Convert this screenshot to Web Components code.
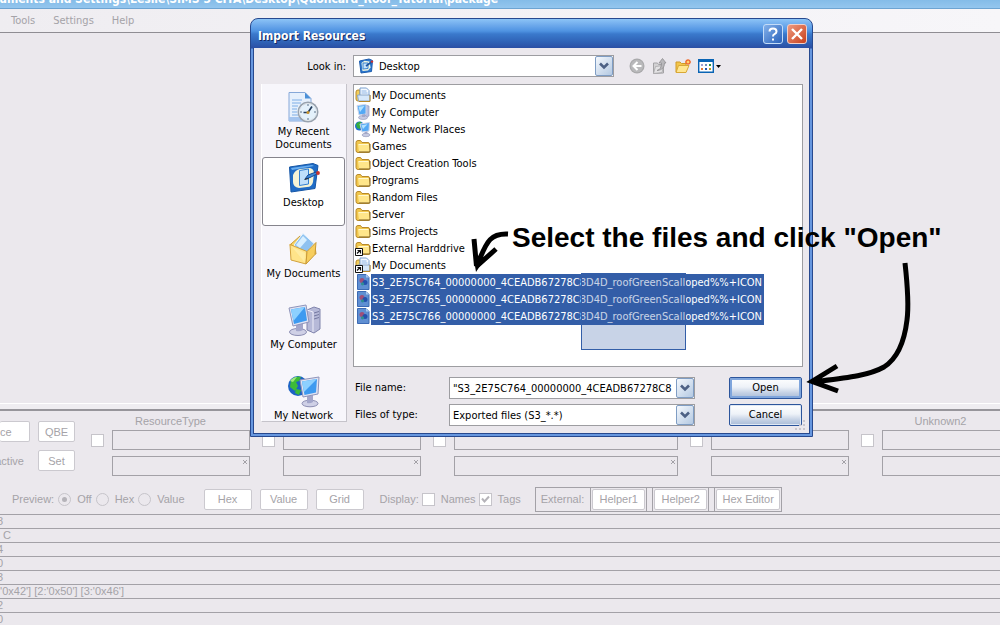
<!DOCTYPE html>
<html lang="en">
<head>
<meta charset="utf-8">
<title>Import Resources</title>
<style>
html, body { margin: 0; height: 100%; }
body {
  overflow: hidden;
  background: #ebe8ed;
  font: 11px/14px "Liberation Sans", Arial, sans-serif;
  color: #a5a3a8;
  --ui: "DejaVu Sans Condensed", "DejaVu Sans", Tahoma, sans-serif;
}
</style>
</head>
<body>
<package-editor>
  <import-dialog></import-dialog>
  <tutorial-note></tutorial-note>
</package-editor>

<script>
const define = (name, html, extra) => customElements.define(name, class extends HTMLElement {
  constructor() {
    super();
    const t = document.createElement('template');
    t.innerHTML = typeof html === 'function' ? html(this) : html;
    this.attachShadow({ mode: 'open' }).append(t.content.cloneNode(true));
    if (extra) extra(this, this.shadowRoot);
  }
});

/* ---------- icon drawings ---------- */
const folder = `<path d="M1 4.500q0-2 2-2h2.500l1.500 2h6q1.500 0 1.500 1.500v7q0 1.500-1.500 1.500H3q-2 0-2-2z" fill="#f0c64c" stroke="#b8892a"/><path d="M3 6.500h11l1 6.500q0 1.200-1.200 1.200H4z" fill="#ffe68a"/><path d="M3.500 6.500h10" stroke="#fff8cf"/><path d="M15 6v8H4" fill="none" stroke="#7a5c1c"/>`;
const docs = `<path d="M1 5q0-2 2-2h2v11H3q-2 0-2-2z" fill="#f3cf5c" stroke="#b8892a"/><path d="M5 1h6.500L14 3.500V11H5z" fill="#f4f9ff" stroke="#7b9fce"/><path d="M6.500 4h5M6.500 6h6" stroke="#8db4e4"/><path d="M2.500 8h12.500v6H3.500z" fill="#d7e8fa" stroke="#8aa6c8"/><path d="M4 14.500h11V8" fill="none" stroke="#b8892a"/>`;
const link = `<path d="M.5 8.500h7v7h-7z" fill="#fff" stroke="#111"/><path d="M2 13.500l3-3M2.500 10.500H5.500V13.500" fill="none" stroke="#111" stroke-width="1.200"/>`;
const desk16 = `<path d="M1.500 3L11 1l3.500 1.500-1 11L3 15z" fill="#2c78cf" stroke="#1c5cae"/><path d="M3.500 5l3-2.200 5 .7 1 6-2.500 3-5.500.5z" fill="#f3f7df"/><path d="M5 5h5v5.500l-5 .5z" fill="#c4e2fb" stroke="#3b83d0"/><path d="M8 8l5.500-4" stroke="#1d559f" stroke-width="1.600"/><circle cx="14" cy="3.600" r="1.200" fill="#c33"/>`;
const pc16 = `<path d="M10 1l4 1v10l-4 2z" fill="#b9bfdf" stroke="#8a90b8" stroke-width=".6"/><path d="M2 1.500l9-1v9.500L4 11z" fill="#54a9f5" stroke="#cfd6ea"/><path d="M3.500 2.700L9.500 2 5 8z" fill="#b3e2ff"/><ellipse cx="8" cy="13.500" rx="4.500" ry="2" fill="#c6cae2" stroke="#8e93b5" stroke-width=".6"/><path d="M7 10.500l3-.5v3H7z" fill="#a3a9ca"/>`;
const net16 = `<circle cx="4.500" cy="5" r="4.500" fill="#1f6fcf"/><path d="M1 3q3-3 5-2l1 3-2 4-3-1z" fill="#35ad3f"/><path d="M5 3l9.500-1.500-.5 8.500-7 1z" fill="#54a9f5" stroke="#cfd6ea"/><path d="M6.500 4.200l6-1L8 8z" fill="#b3e2ff"/><path d="M9.500 11l3-.5v3h-3z" fill="#a3a9ca"/><ellipse cx="11" cy="14" rx="4" ry="1.700" fill="#c6cae2" stroke="#8e93b5" stroke-width=".6"/>`;
const ICONS = {
  folder: [16, folder],
  'folder-link': [16, folder + link],
  docs: [16, docs],
  'docs-link': [16, docs + link],
  desktop: [16, desk16],
  computer: [16, pc16],
  network: [16, net16],
  package: [16, `<path d="M2.500 .5h8.500l3 3v12H2.500z" fill="#5f8fd2" stroke="#3c6ab4"/><path d="M11 .5v3h3z" fill="#a8c8f0"/><circle cx="7" cy="6.500" r="2.500" fill="#a04f78"/><circle cx="10" cy="8.500" r="2.500" fill="#2451ad"/><circle cx="7.500" cy="9.800" r="1.600" fill="#2f8f92"/>`],
  back: [16, `<circle cx="8" cy="8" r="7.500" fill="#a9a9ab"/><circle cx="8" cy="8" r="6.300" fill="#b9b9bb"/><path d="M8.500 4L4.500 8l4 4M5 8h7.500" fill="none" stroke="#fff" stroke-width="2"/>`],
  up: [16, `<path d="M1.500 5h4l1 1.500h5V15l-10 .5z" fill="#d3d2d4" stroke="#a3a2a5"/><path d="M3.500 8.500l8-1-1.500 7-8.500 1z" fill="#e3e2e4" stroke="#a9a8ab" stroke-width=".8"/><path d="M5 12.500q4.500-1 4.500-7.500H7L10.500.5 14 5h-1.500q0 7-7.500 7.500z" fill="#b9b8bb" stroke="#8f8e91" stroke-width=".8"/>`],
  create: [16, `<path d="M1 4h4l1.500 1.500H11V14H1z" fill="#f3c54a" stroke="#d09b28"/><path d="M3.500 7.500H14L11 14.500H1z" fill="#ffe690" stroke="#d9a836"/><path d="M13 1v6M10 4h6M10.900 1.900l4.200 4.200M15.100 1.900l-4.200 4.200" stroke="#f0682a" stroke-width="1.300"/><circle cx="13" cy="4" r="1.300" fill="#ffd36b"/>`],
  views: [16, `<path d="M.7 1.700h14.600v12.600H.7z" fill="#fff" stroke="#0a64b4" stroke-width="1.400"/><path d="M0 1h16v3H0z" fill="#0a64b4"/><path d="M3 6h2v2H3z" fill="#a4a0d0"/><path d="M7 6h2v2H7z" fill="#6f8fbd"/><path d="M11 6h2v2h-2z" fill="#2c9240"/><path d="M3 10h2v2H3z" fill="#e07838"/><path d="M7 10h2v2H7z" fill="#2356b0"/><path d="M11 10h2v2h-2z" fill="#c29a20"/>`],
  'recent-32': [32, `<path d="M1 1.500h16l6 6V30H1z" fill="#e6f0fc" stroke="#86a8d8"/><path d="M17 1.500v6h6z" fill="#4a90d8"/><path d="M4 9h10M4 12h9M4 15h6M4 18h5M4 21h5M4 24h6" stroke="#7faee6"/><path d="M1 26h18v4H1z" fill="#a4c4ee"/><circle cx="20" cy="21" r="10.500" fill="#98a2ae"/><circle cx="20" cy="21" r="8.600" fill="#e4f1fb" stroke="#dfe5ea"/><path d="M20 13v2M20 27v2M12 21h2M26 21h2" stroke="#5c7187"/><path d="M24 15.500L20 21.500h-4.500" fill="none" stroke="#243c5c" stroke-width="1.700"/><circle cx="20" cy="21.500" r="1.500" fill="#c8932c"/>`],
  'desktop-32': [32, `<path d="M1.500 5L25 1.500l5 2-3 23L3 30z" fill="#1f6cc6" stroke="#1757a6"/><path d="M3 6l21-3 2 1-22 4z" fill="#69aef0"/><path d="M5 13q2-5 7-6l10-1q4 1 4 5l-1 9q-1 5-6 5l-8 1q-6-1-6-6z" fill="#f5f4d6"/><path d="M11.500 8.500l9-1.500v15l-9 1.500z" fill="#bfe0fb" stroke="#3380d2"/><path d="M17 17l3-4 8-3 1 2-7 3.500z" fill="#3f8ad8" stroke="#174b93"/><path d="M16.500 17.500l4-1" stroke="#222"/><circle cx="30" cy="11" r="1.900" fill="#c8342c"/>`],
  'documents-32': [32, `<path d="M1 12l2-1.500 3 .5v3z" fill="#e8b440"/><path d="M3 11l9-8 15 10 1 8H5z" fill="#f7d566" stroke="#c99a38"/><path d="M15 .5l11 10-9 12L6 12z" fill="#8fc2f0" stroke="#eaf5ff"/><path d="M15 3l4 4-7 8-4-3z" fill="#d8efff"/><path d="M2 11.500l17 7-1 12.500L3 27z" fill="#ffe48a" stroke="#d2a23c"/><path d="M19 18.500l9-9-1 12-9 9.500z" fill="#f7ce5e" stroke="#c99a38"/><path d="M4 14l13 6-.5 9z" fill="#fff0ac" opacity=".7"/>`],
  'computer-32': [32, `<path d="M19 6l7-3 6 2v20l-6 4-7-3z" fill="#b6b9d8" stroke="#8084ac"/><path d="M19 6l6 2v20" fill="none" stroke="#eeeefa"/><path d="M26 9l5-1.500M26 12l5-1.500M26 15l5-1.500" stroke="#7478a0"/><ellipse cx="10" cy="28" rx="8.500" ry="3.500" fill="#cfd0e6" stroke="#8b8db2"/><path d="M8 20l7-1v7q-3 2-7 1z" fill="#a3a6ca"/><path d="M1 4l17-3 3 17-16 4z" fill="#dfe2f2" stroke="#8f94ba"/><path d="M3 5.500l14-2.500 2 13.500L6 20z" fill="#3d9af0"/><path d="M3 5.500l14-2.500L5.500 17z" fill="#8dd0ff"/>`],
  'network-32': [32, `<circle cx="10" cy="11" r="10" fill="#1c63c4"/><path d="M3 5q5-5 10-3l-2 4-3 1 2 4-3 5-5-4z" fill="#3dbb38"/><path d="M8 14l5 1-2 5-4-2z" fill="#3dbb38"/><path d="M2 6q3-4 7-4l-4 5z" fill="#9fe87a"/><ellipse cx="22" cy="28.500" rx="8" ry="3.300" fill="#cfd0e6" stroke="#8b8db2"/><path d="M19 21l6-1v7q-3 2-6 1z" fill="#a3a6ca"/><path d="M12 5l19-3-1 17-15 3z" fill="#dfe2f2" stroke="#8f94ba"/><path d="M14 6.500l15-2.500-1 13.500L16.500 20z" fill="#3d9af0"/><path d="M14 6.500l15-2.500L16 17z" fill="#8dd0ff"/>`]
};
define('xp-icon', el => {
  const [size, art] = ICONS[el.getAttribute('name')];
  return `<style>:host{display:block;flex:none;width:${size}px;height:${size}px}svg{display:block;overflow:visible}</style>
  <svg width="${size}" height="${size}" viewBox="0 0 ${size} ${size}" aria-hidden="true">${art}</svg>`;
});

/* ---------- dialog controls ---------- */
const arrow = `<svg width="10" height="8" viewBox="0 0 10 8" aria-hidden="true"><path d="M1 1.500l4 4 4-4" fill="none" stroke="#4d6185" stroke-width="2.600"/></svg>`;
const comboCss = `
  :host { display: block; min-width: 0; }
  .box { display: grid; grid-template-columns: minmax(0, 1fr) 18px; height: 22px; box-sizing: border-box; border: 1px solid #9d9da1; background: #fff; align-items: stretch; }
  select, input { appearance: none; border: 0; margin: 0; outline: 0; background: none; border-radius: 0; min-width: 0; width: 100%; padding: 1px 3px 0; font: 11px/18px var(--ui); color: #000; }
  .arrow { display: grid; place-items: center; margin: 0; padding: 0; border: 1px solid #7f9dc4; border-radius: 2px; background: linear-gradient(135deg, #f4f8fd, #b4c9e2); }
`;
define('xp-drop-down', el => `<style>${comboCss}
  .box { position: relative; }
  select { grid-area: 1 / 1 / 2 / 3; padding-left: ${el.hasAttribute('icon') ? 25 : 3}px; }
  .arrow { grid-area: 1 / 2; pointer-events: none; }
  xp-icon { grid-area: 1 / 1; margin: 2px 0 0 4px; pointer-events: none; }
  </style><div class="box"><select aria-label="${el.getAttribute('label')}"><option>${el.getAttribute('value')}</option></select>
  ${el.hasAttribute('icon') ? `<xp-icon name="${el.getAttribute('icon')}"></xp-icon>` : ''}<span class="arrow">${arrow}</span></div>`);
define('xp-combo-box', el => `<style>${comboCss}</style>
  <div class="box"><input type="text" aria-label="${el.getAttribute('label')}"><button class="arrow" type="button" aria-label="Show list">${arrow}</button></div>`,
  (el, root) => { root.querySelector('input').value = el.getAttribute('value'); });
define('xp-button', el => `<style>
  :host { display: block; grid-column: 4; }
  button { display: block; width: 100%; height: 22px; padding: 0; border: 1px solid #2c559c; border-radius: 2px; font: 11px/18px var(--ui); color: #000;
    background: linear-gradient(#fff, #eef2f8 45%, #c3d0e4 75%, #a9bcd8); box-shadow: inset 0 0 0 1px #dfe8f4; }
  :host([default]) button { box-shadow: inset 0 0 0 2px #7fa5dc; }
  </style><button type="button"><slot></slot></button>`);

define('place-item', el => `<style>
  :host { display: block; flex: none; height: 71px; box-sizing: border-box; padding: 0 1px 2px 0; }
  button { display: flex; flex-direction: column; align-items: center; gap: 2px; width: 100%; height: 69px; box-sizing: border-box; padding: 4px 0 0; border: 1px solid transparent; border-radius: 3px; background: none; font: 11px/13px var(--ui); color: #000; }
  :host([selected]) button { background: #fff; border-color: #85848c; }
  span { width: 76px; text-align: center; }
  </style><button type="button"><xp-icon name="${el.getAttribute('icon')}"></xp-icon><span><slot></slot></span></button>`);

define('file-row', el => `<style>
  :host { display: flex; height: 17px; align-items: center; }
  xp-icon { margin-bottom: 2px; }
  span { padding: 0 2px 0 1px; line-height: 17px; white-space: nowrap; }
  :host([selected]) span { background: #335ea8; color: #fff; }
  </style><xp-icon name="${el.getAttribute('icon')}"></xp-icon><span><slot></slot></span>`);

define('import-dialog', `<style>
  :host { display: block; position: absolute; left: 25%; top: 18px; width: 563px; box-sizing: border-box; padding: 0 2px 2px; border: 1px solid #27498f; border-radius: 8px 8px 0 0;
    background: linear-gradient(#8cc4f6, #6eaaec 6px, #4f93e2 12px, #3a79cc 15px, #2f62b6 23px, #2b4fa4 29px, #6797df 30px); font: 11px/14px var(--ui); color: #000; }
  header { display: flex; align-items: center; gap: 4px; height: 29px; padding: 1px 3px 0 5px; box-sizing: border-box; }
  h1 { flex: 1; margin: 0; padding-top: 3px; font: bold 12px/16px var(--ui); color: #fff; text-shadow: 1px 1px 0 #14295f; }
  header button { width: 20px; height: 20px; box-sizing: border-box; padding: 0; border: 1px solid #c3dcf8; border-radius: 3px; display: grid; place-items: center; background: linear-gradient(135deg, #83b1ea, #2a62bb); }
  header .close { background: linear-gradient(135deg, #ee9a80, #c8401c); border-color: #f1cfc8; }
  main { display: grid; grid-template-columns: 86px minmax(0, 1fr); grid-template-rows: 22px auto auto; column-gap: 6px; row-gap: 7px; padding: 7px 6px 7px 7px; border: 1px solid #27498f; border-top: 0; background: #ebe8ed; }
  .look { text-align: right; line-height: 24px; padding-right: 1px; }
  .bar { display: flex; align-items: center; gap: 7px; }
  .bar xp-drop-down { width: 261px; margin-right: 8px; }
  .bar button { display: flex; align-items: center; gap: 2px; padding: 0; border: 0; background: none; }
  nav { grid-row: 2 / 4; height: 338px; box-sizing: border-box; padding-top: 2px; overflow: hidden; background: #f7f6fb; border: solid #fff; border-width: 0 0 1px 1px; border-right: 1px solid #c5c3ca; border-bottom-color: #c5c3ca; }
  .files { position: relative; height: 283px; box-sizing: border-box; padding: 2px 1px 0; border: 1px solid #9d9da1; background: #fff; }
  .marquee { position: absolute; left: 227px; top: 188px; width: 103px; height: 75px; border: 1px solid #335ea8; background: rgba(51, 94, 168, .27); }
  form { display: grid; grid-template-columns: 94px minmax(0, 246px) 34px minmax(0, 73px); grid-template-rows: 22px 22px; row-gap: 5px; align-items: center; padding: 3px 0 0 2px; }
  .grip { position: absolute; right: 5px; bottom: 5px; }
  </style>
  <header><h1>Import Resources</h1>
    <button type="button" aria-label="Help"><svg width="12" height="14" viewBox="0 0 12 14"><path d="M2.500 4.500q0-3 3.500-3t3.500 3Q9.500 6 7.500 7.200 6 8 6 9.500M6 11.500v2" fill="none" stroke="#fff" stroke-width="2"/></svg></button>
    <button type="button" class="close" aria-label="Close"><svg width="12" height="12" viewBox="0 0 12 12"><path d="M1 1l10 10M11 1L1 11" stroke="#fff" stroke-width="2.400"/></svg></button>
  </header>
  <main>
    <div class="look">Look in:</div>
    <div class="bar"><xp-drop-down label="Look in" icon="desktop" value="Desktop"></xp-drop-down>
      <button type="button" aria-label="Back"><xp-icon name="back"></xp-icon></button>
      <button type="button" aria-label="Up one level"><xp-icon name="up"></xp-icon></button>
      <button type="button" aria-label="New folder"><xp-icon name="create"></xp-icon></button>
      <button type="button" aria-label="Views"><xp-icon name="views"></xp-icon><svg width="5" height="3"><path d="M0 0h5L2.500 3z"/></svg></button>
    </div>
    <nav aria-label="Places">
      <place-item icon="recent-32">My Recent Documents</place-item>
      <place-item icon="desktop-32" selected>Desktop</place-item>
      <place-item icon="documents-32">My Documents</place-item>
      <place-item icon="computer-32">My Computer</place-item>
      <place-item icon="network-32">My Network</place-item>
    </nav>
    <div class="files">
      <file-row icon="docs">My Documents</file-row>
      <file-row icon="computer">My Computer</file-row>
      <file-row icon="network">My Network Places</file-row>
      <file-row icon="folder">Games</file-row>
      <file-row icon="folder">Object Creation Tools</file-row>
      <file-row icon="folder">Programs</file-row>
      <file-row icon="folder">Random Files</file-row>
      <file-row icon="folder">Server</file-row>
      <file-row icon="folder">Sims Projects</file-row>
      <file-row icon="folder-link">External Harddrive</file-row>
      <file-row icon="docs-link">My Documents</file-row>
      <file-row icon="package" selected>S3_2E75C764_00000000_4CEADB67278C8D4D_roofGreenScalloped%%+ICON</file-row>
      <file-row icon="package" selected>S3_2E75C765_00000000_4CEADB67278C8D4D_roofGreenScalloped%%+ICON</file-row>
      <file-row icon="package" selected>S3_2E75C766_00000000_4CEADB67278C8D4D_roofGreenScalloped%%+ICON</file-row>
      <div class="marquee"></div>
    </div>
    <form>
      <span>File name:</span><xp-combo-box label="File name" value='"S3_2E75C764_00000000_4CEADB67278C8'></xp-combo-box><xp-button default>Open</xp-button>
      <span>Files of type:</span><xp-drop-down label="Files of type" value="Exported files (S3_*.*)"></xp-drop-down><xp-button>Cancel</xp-button>
    </form>
  </main>
  <svg class="grip" width="12" height="12" viewBox="0 0 12 12" aria-hidden="true"><path d="M8 1h2v2H8zM8 5h2v2H8zM8 9h2v2H8zM4 5h2v2H4zM4 9h2v2H4zM0 9h2v2H0z" fill="#c9c6cd"/></svg>`);

/* ---------- handwritten instruction over the window ---------- */
define('tutorial-note', `<style>
  :host { display: block; position: absolute; left: 25%; top: 218px; width: 700px; height: 190px; color: #000; pointer-events: none; }
  p { margin: 0; padding: 4px 0 0 262px; font: bold 28px/32px "Liberation Sans", Arial, sans-serif; white-space: nowrap; }
  svg { position: absolute; left: 0; top: 0; overflow: visible; }
  </style>
  <p>Select the files and click "Open"</p>
  <svg width="700" height="190" viewBox="250 218 700 190" fill="none" stroke="#000" stroke-width="5" aria-hidden="true">
    <path d="M508 234C488 233 486 245 477 265M474 239l2.500 27M496 249l-19 17"/>
    <path d="M905 263C908 290 909 305 907 320C904 345 895 360 884 367C868 376 845 378 812 382M837 366L812 381.500L838 391"/>
    <path d="M476 272l-2-12 8 3zM807 382l12-6 1 9z" fill="#000" stroke="none"/>
  </svg>`);

/* ---------- editor behind the dialog ---------- */
define('flat-button', `<style>
  :host { display: block; }
  button { display: block; width: 100%; height: 21px; padding: 0; border: 1px solid #cbc9cf; border-radius: 2px; background: #fff; font: inherit; color: inherit; white-space: nowrap; }
  :host([flush]) button { text-align: left; border-left: 0; }
  </style><button type="button"><slot></slot></button>`);
define('flat-choice', el => {
  const radio = el.getAttribute('kind') === 'radio';
  return `<style>
  :host { display: block; }
  label { display: flex; align-items: center; gap: 6px; }
  .box { display: grid; }
  input { grid-area: 1 / 1; appearance: none; margin: 0; width: 13px; height: 13px; box-sizing: border-box; border: 1px solid #c6c4ca; ${radio ? 'border-radius: 50%;' : 'background: #fff;'} }
  svg { grid-area: 1 / 1; pointer-events: none; }
  </style><label><span class="box"><input type="${radio ? 'radio' : 'checkbox'}"${el.hasAttribute('checked') ? ' checked' : ''}>
  ${el.hasAttribute('checked') ? `<svg width="13" height="13" viewBox="0 0 13 13">${radio ? '<circle cx="6.500" cy="6.500" r="2.500" fill="#b5b3b9"/>' : '<path d="M3 5.500l2.500 3L10 3.500" fill="none" stroke="#b5b3b9" stroke-width="2"/>'}</svg>` : ''}</span><slot></slot></label>`;
});
define('filter-field', el => `<style>
  :host { display: grid; flex: none; grid-template-columns: 13px ${el.getAttribute('size')}px; grid-template-rows: 10px 20px 20px; column-gap: 8px; row-gap: 6px; align-items: center; }
  .name { grid-column: 1 / 3; text-align: center; align-self: start; }
  input[type=text] { grid-column: 2; appearance: none; width: 100%; height: 20px; margin: 0; padding: 0 4px; box-sizing: border-box; border: 1px solid #a3a1a7; background: none; border-radius: 0; font: inherit; color: inherit; }
  input[type=checkbox] { appearance: none; width: 13px; height: 13px; box-sizing: border-box; margin: 0; border: 1px solid #c6c4ca; background: #fff; }
  .mark { display: grid; grid-column: 2; }
  .mark * { grid-area: 1 / 1 !important; }
  .mark svg { justify-self: end; margin: 4px 3px 0 0; }
  </style><span class="name"><slot></slot></span><input type="checkbox" aria-label="Use filter"><input type="text" aria-label="Filter">
  <span class="mark"><input type="text" aria-label="Value"><svg width="4" height="4" viewBox="0 0 4 4"><path d="M0 0l4 4M4 0L0 4" stroke="#a3a1a7"/></svg></span>`);

define('package-editor', `<style>
  :host { display: flex; flex-direction: column; height: 100vh; overflow: hidden; position: relative; }
  .title { flex: none; display: flex; justify-content: flex-end; align-items: flex-end; height: 9px; box-sizing: border-box; padding-right: 50%; overflow: hidden; border-bottom: 1px solid #6da4d2; background: linear-gradient(#84bce8, #94c6ee); color: #fff; font: bold 12px/16px var(--ui); white-space: nowrap; }
  .title span { padding-right: 2px; margin-bottom: 1px; }
  .menu { flex: none; display: flex; align-items: center; gap: 18px; height: 24px; box-sizing: border-box; padding: 1px 11px 0; border-bottom: 1px solid #8f8d93; background: linear-gradient(90deg, #efedf1, #f7f6f9); font: 11px/14px var(--ui); }
  .menu a { color: inherit; text-decoration: none; }
  .work { flex: none; height: 370px; }
  .panel { flex: none; display: flex; height: 76px; padding-top: 4px; border-top: 1px solid #fff; box-shadow: inset 0 5px 0 #efedf1, inset 0 7px 0 #97959b; }
  .left { flex: none; display: grid; grid-template-columns: 30px 37px; column-gap: 8px; row-gap: 8px; grid-auto-rows: 21px; padding: 13px 16px 0 0; align-items: center; }
  .left span { text-align: right; padding-right: 6px; justify-self: end; }
  .fields { display: flex; gap: 12px; padding-top: 6px; }
  .tools { flex: none; display: flex; align-items: center; height: 30px; padding: 0 0 0 12px; gap: 8px; box-sizing: border-box; }
  .group { display: flex; align-items: center; gap: 4px; }
  .group.push { margin-left: 11px; gap: 8px; }
  .group.show { margin-left: 8px; gap: 3px; }
  .tools flat-button { width: 48px; }
  .ext { display: flex; align-items: center; margin-left: 6px; border: 1px solid #a3a1a7; height: 23px; }
  .ext > span { padding: 0 6px 0 5px; }
  .ext div { padding: 1px; border-left: 1px solid #a3a1a7; border-right: 1px solid #a3a1a7; margin-right: 5px; }
  .ext div:last-child { margin-right: 0; border-right: 0; }
  .ext flat-button { width: 53px; }
  .ext div:last-child flat-button { width: 64px; }
  table { width: 100%; border-collapse: collapse; table-layout: fixed; }
  td { height: 13px; line-height: 13px; padding: 0; border-top: 1px solid #a3a1a7; text-indent: -3px; white-space: pre; overflow: hidden; }
  </style>
  <div class="title"><span>Documents and Settings\\Leslie\\SIMS 3 CITA\\Desktop\\Quoncard_Roof_Tutorial\\package</span></div>
  <nav class="menu"><a href="#tools">Tools</a><a href="#settings">Settings</a><a href="#help">Help</a></nav>
  <div class="work"></div>
  <section class="panel">
    <div class="left"><flat-button flush>ce</flat-button><flat-button>QBE</flat-button><span>active</span><flat-button>Set</flat-button></div>
    <div class="fields">
      <filter-field size="138">ResourceType</filter-field><filter-field size="138"></filter-field><filter-field size="224"></filter-field><filter-field size="138"></filter-field><filter-field size="138">Unknown2</filter-field>
    </div>
  </section>
  <section class="tools">
    <div class="group"><span>Preview:</span><flat-choice kind="radio" checked>Off</flat-choice><flat-choice kind="radio">Hex</flat-choice><flat-choice kind="radio">Value</flat-choice></div>
    <div class="group push"><flat-button>Hex</flat-button><flat-button>Value</flat-button><flat-button>Grid</flat-button></div>
    <div class="group show"><span>Display:</span><flat-choice kind="check">Names</flat-choice><flat-choice kind="check" checked>Tags</flat-choice></div>
    <div class="ext"><span>External:</span><div><flat-button>Helper1</flat-button></div><div><flat-button>Helper2</flat-button></div><div><flat-button>Hex Editor</flat-button></div></div>
  </section>
  <table><tbody></tbody></table>
  <slot></slot>`,
  (el, root) => {
    const body = root.querySelector('tbody');
    for (const text of ['8', '  C', '4', '0', '3', ":'0x42'] [2:'0x50'] [3:'0x46']", '2', '0'])
      body.insertRow().insertCell().textContent = text;
  });
</script>
</body>
</html>
